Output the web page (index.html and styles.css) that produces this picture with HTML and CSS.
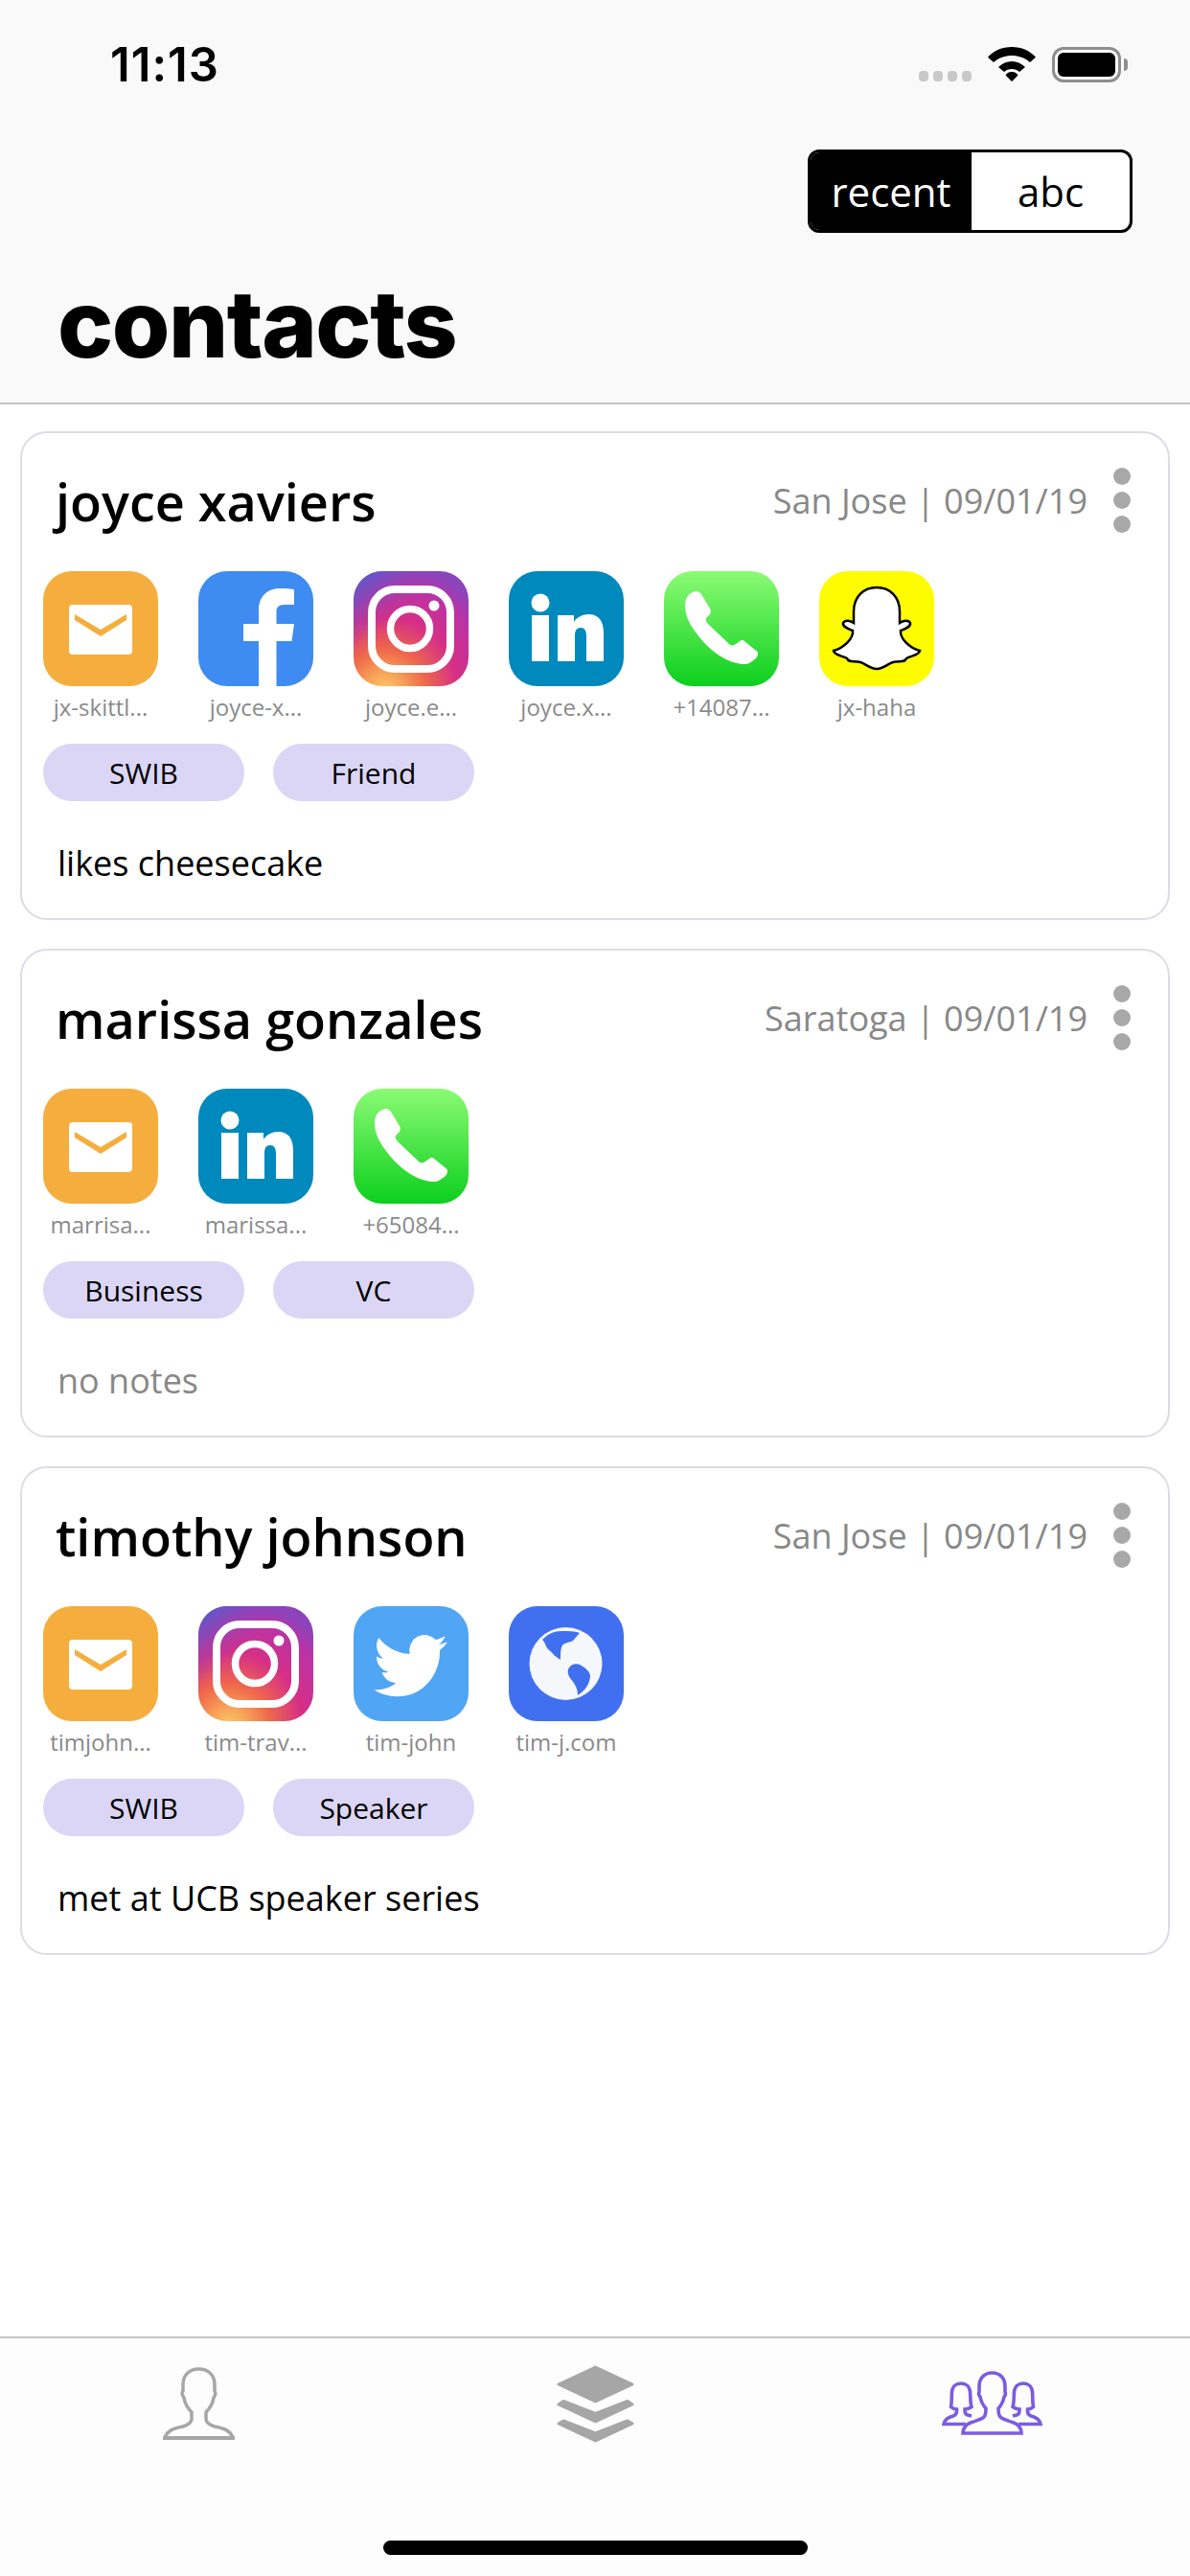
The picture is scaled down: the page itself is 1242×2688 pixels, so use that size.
FILE: index.html
```html
<!DOCTYPE html>
<html lang="en">
<head>
    <meta charset="UTF-8">
    <meta name="viewport" content="width=device-width, initial-scale=1.0">
    <title>contacts</title>
    <link rel="stylesheet" href="styles.css">
</head>
<body>

<!-- shared icons -->
<svg class="sprite" xmlns="http://www.w3.org/2000/svg">
    <defs>
        <radialGradient id="insta-warm" cx="0.27" cy="1.04" r="1.1">
            <stop offset="0" stop-color="#fdc868"/>
            <stop offset="0.14" stop-color="#f8a55a"/>
            <stop offset="0.32" stop-color="#ef6a4a"/>
            <stop offset="0.58" stop-color="#d62f86"/>
            <stop offset="0.85" stop-color="#b833a8"/>
            <stop offset="1" stop-color="#8c44bb"/>
        </radialGradient>
        <linearGradient id="insta-cool" x1="0" y1="0" x2="0.35" y2="0.4">
            <stop offset="0" stop-color="#4363d2"/>
            <stop offset="1" stop-color="#8c44bb" stop-opacity="0"/>
        </linearGradient>
        <linearGradient id="phone-green" x1="0" y1="0" x2="0" y2="1">
            <stop offset="0" stop-color="#8bfb74"/>
            <stop offset="1" stop-color="#0ccf1e"/>
        </linearGradient>
    </defs>
    <symbol id="i-mail" viewBox="0 0 120 120">
        <rect width="120" height="120" fill="#f5ae3d"/>
        <rect x="27" y="35" width="66" height="52" rx="4" fill="#fff"/>
        <path d="M33 45 60 61 87 45V51L60 68 33 51Z" fill="#f5ae3d"/>
    </symbol>
    <symbol id="i-fb" viewBox="0 0 120 120">
        <rect width="120" height="120" fill="#3e8cf2"/>
        <path d="M63 120V73H47V55H63V41C63 25 73 18 86 18C92 18 97 18.5 100 19V35H90C83 35 81.5 38 81.5 43V55H100L97.5 73H81.5V120Z" fill="#fff"/>
    </symbol>
    <symbol id="i-insta" viewBox="0 0 120 120">
        <rect width="120" height="120" fill="url(#insta-warm)"/>
        <rect width="120" height="120" fill="url(#insta-cool)"/>
        <rect x="19" y="19" width="82" height="83" rx="24" fill="none" stroke="#fff" stroke-width="8"/>
        <circle cx="59" cy="60" r="20.5" fill="none" stroke="#fff" stroke-width="7.5"/>
        <circle cx="84" cy="36" r="5.5" fill="#fff"/>
    </symbol>
    <symbol id="i-linkedin" viewBox="0 0 120 120">
        <rect width="120" height="120" fill="#0089bd"/>
        <circle cx="33" cy="33" r="9.5" fill="#fff"/>
        <path d="M24 46H42V94H24ZM51 46H68V53C71 48 77 45 83 45C95 45 99 53 99 65V94H81V68C81 62 79 59 75 59C70 59 69 63 69 68V94H51Z" fill="#fff"/>
    </symbol>
    <symbol id="i-phone" viewBox="0 0 120 120">
        <rect width="120" height="120" fill="url(#phone-green)"/>
        <path d="M30 22C25 24 22 29 22 36C22 46 27 56 34 65C42 76 56 90 72 95C79 97 85 98 89 96C94 93 98 90 98 86C98 84 97 83 95 82L84 73C82 71 80 72 78 74L73 77C71 78 69 77 67 75L48 57C44 53 43 51 44 49L48 45C49 43 49 41 48 39L39 24C37 21 33 20 30 22Z" fill="#fff"/>
    </symbol>
    <symbol id="i-snap" viewBox="0 0 120 120">
        <rect width="120" height="120" fill="#fffc00"/>
        <path d="M60 17C46 17 36 27 36 42V54C33 52 27 50 25 54C24 58 30 60 35 62C36 70 26 80 15 83C16 88 24 88 29 91C31 96 36 93 43 95C49 97 53 102 60 102C67 102 71 97 77 95C84 93 89 96 91 91C96 88 104 88 105 83C94 80 84 70 85 62C90 60 96 58 95 54C93 50 87 52 84 54V42C84 27 74 17 60 17Z" fill="#fff" stroke="#000" stroke-width="2.5"/>
    </symbol>
    <symbol id="i-twitter" viewBox="0 0 120 120">
        <rect width="120" height="120" fill="#50a5f5"/>
        <path transform="translate(21 22.5) scale(3.2 3.3)" d="M23.953 4.57a10 10 0 01-2.825.775 4.958 4.958 0 002.163-2.723c-.951.555-2.005.959-3.127 1.184a4.92 4.92 0 00-8.384 4.482C7.69 8.095 4.067 6.13 1.64 3.162a4.822 4.822 0 00-.666 2.475c0 1.71.87 3.213 2.188 4.096a4.904 4.904 0 01-2.228-.616v.06a4.923 4.923 0 003.946 4.827 4.996 4.996 0 01-2.212.085 4.936 4.936 0 004.604 3.417 9.867 9.867 0 01-6.102 2.105c-.39 0-.779-.023-1.17-.067a13.995 13.995 0 007.557 2.209c9.053 0 13.998-7.496 13.998-13.985 0-.21 0-.42-.015-.63A9.935 9.935 0 0024 4.59z" fill="#fff"/>
    </symbol>
    <symbol id="i-web" viewBox="0 0 120 120">
        <rect width="120" height="120" fill="#4070f0"/>
        <circle cx="59.500" cy="60" r="38" fill="#f5f7fa"/>
        <path d="M35 35C41 29 47 26 55 26C62 26 69 26 74 28L67 36C63 38 58 38 56 41C54 44 54 50 54 56L47 51C46 48 41 46 39 42C38 39 37 37 35 35Z" fill="#4070f0"/>
        <path d="M62 66C64 61 70 59 74 61C80 64 84 68 85 72C85 78 82 85 76 90L72 93C72 85 68 80 64 75C62 72 61 69 62 66Z" fill="#4070f0"/>
    </symbol>
</svg>

<div class="app">
    <header class="top">
        <div class="status-bar">
            <span class="clock">11:13</span>
            <div class="status-icons">
                <div class="signal"><i></i><i></i><i></i><i></i></div>
                <svg class="wifi" viewBox="0 0 50 36">
                    <path d="M0 10.700C6 4 15 0 25 0S44 4 50 10.700L44 16C38 11 32 9 25 9S12 11 6 16ZM11 21C15 17 20 15 25 15S35 17 39 21L33 26C31 24 28 23 25 23S19 24 17 26ZM25 26C22 26 20 27 18.500 29.500L25 36 31.500 29.500C30 27 28 26 25 26Z" fill="#000"/>
                </svg>
                <div class="battery"><div class="battery-fill"></div></div>
            </div>
        </div>
        <div class="sort-row">
            <div class="sort-toggle">
                <span class="sort-option active">recent</span>
                <span class="sort-option">abc</span>
            </div>
        </div>
        <h1>contacts</h1>
    </header>

    <main class="contact-list">
        <section class="card">
            <div class="card-head">
                <h2>joyce xaviers</h2>
                <span class="meta">San Jose | 09/01/19</span>
                <div class="more"><i></i><i></i><i></i></div>
            </div>
            <div class="links">
                <div class="link"><svg class="app-icon"><use href="#i-mail"/></svg><span>jx-skittl...</span></div>
                <div class="link"><svg class="app-icon"><use href="#i-fb"/></svg><span>joyce-x...</span></div>
                <div class="link"><svg class="app-icon"><use href="#i-insta"/></svg><span>joyce.e...</span></div>
                <div class="link"><svg class="app-icon"><use href="#i-linkedin"/></svg><span>joyce.x...</span></div>
                <div class="link"><svg class="app-icon"><use href="#i-phone"/></svg><span>+14087...</span></div>
                <div class="link"><svg class="app-icon"><use href="#i-snap"/></svg><span>jx-haha</span></div>
            </div>
            <div class="tags">
                <span class="tag">SWIB</span>
                <span class="tag">Friend</span>
            </div>
            <p class="note">likes cheesecake</p>
        </section>

        <section class="card">
            <div class="card-head">
                <h2>marissa gonzales</h2>
                <span class="meta">Saratoga | 09/01/19</span>
                <div class="more"><i></i><i></i><i></i></div>
            </div>
            <div class="links">
                <div class="link"><svg class="app-icon"><use href="#i-mail"/></svg><span>marrisa...</span></div>
                <div class="link"><svg class="app-icon"><use href="#i-linkedin"/></svg><span>marissa...</span></div>
                <div class="link"><svg class="app-icon"><use href="#i-phone"/></svg><span>+65084...</span></div>
            </div>
            <div class="tags">
                <span class="tag">Business</span>
                <span class="tag">VC</span>
            </div>
            <p class="note empty">no notes</p>
        </section>

        <section class="card">
            <div class="card-head">
                <h2>timothy johnson</h2>
                <span class="meta">San Jose | 09/01/19</span>
                <div class="more"><i></i><i></i><i></i></div>
            </div>
            <div class="links">
                <div class="link"><svg class="app-icon"><use href="#i-mail"/></svg><span>timjohn...</span></div>
                <div class="link"><svg class="app-icon"><use href="#i-insta"/></svg><span>tim-trav...</span></div>
                <div class="link"><svg class="app-icon"><use href="#i-twitter"/></svg><span>tim-john</span></div>
                <div class="link"><svg class="app-icon"><use href="#i-web"/></svg><span>tim-j.com</span></div>
            </div>
            <div class="tags">
                <span class="tag">SWIB</span>
                <span class="tag">Speaker</span>
            </div>
            <p class="note">met at UCB speaker series</p>
        </section>
    </main>

    <nav class="tab-bar">
        <div class="tabs">
            <svg class="tab-user" viewBox="0 0 75 76">
                <path d="M37.500 2C27 2 21 9 21 18V25C19.500 27 20.500 30 22 32C23 38 26 43 30 47V54C30 58 27 60 21 62C10 64 4 67 2 74H73C71 67 65 64 54 62C48 60 45 58 45 54V47C49 43 52 38 53 32C54.500 30 55.500 27 54 25V18C54 9 48 2 37.500 2Z" fill="none" stroke="#a6a6a6" stroke-width="3.500"/>
                <path d="M0 74H75" stroke="#a6a6a6" stroke-width="4"/>
            </svg>
            <svg class="tab-stack" viewBox="0 0 81 81">
                <g fill="#a6a6a6" stroke="#a6a6a6" stroke-width="3" stroke-linejoin="round">
                    <path d="M40.500 2 79 20 40.500 38 2 20Z"/>
                    <path d="M7 37.500 40.500 50.500 74 37.500 79 41 40.500 59 2 41Z"/>
                    <path d="M7 58 40.500 71 74 58 79 61 40.500 79 2 61Z"/>
                </g>
            </svg>
            <svg class="tab-group" viewBox="0 0 105 68">
                <g fill="none" stroke="#7b5ce0" stroke-width="3.600">
                    <path d="M52.500 2C44 2 39 8 39 16C39 19 39 21 39 22C38 24 39 26 40 27C41 32 43 36 46 39C46 43 46 46 44 48C41 51 35 52 30 54C25 56 22 60 22 65H83C83 60 80 56 75 54C70 52 64 51 61 48C59 46 59 43 59 39C62 36 64 32 65 27C66 26 67 24 66 22C66 21 66 19 66 16C66 8 61 2 52.500 2Z"/>
                    <path d="M25 55.500H2C3 50 8 48 12 47C15 46 16 44 15.500 40C13 40 11 39 9.500 37.500C10.500 33 10 28 10.500 22C11 16 15 13 20 13C25 13 29 16 29.500 22C30 28 29.500 33 31 37.500C29 39 26 40 24 40C24 43 24 45 27 46L31 47"/>
                    <path transform="matrix(-1 0 0 1 105 0)" d="M25 55.500H2C3 50 8 48 12 47C15 46 16 44 15.500 40C13 40 11 39 9.500 37.500C10.500 33 10 28 10.500 22C11 16 15 13 20 13C25 13 29 16 29.500 22C30 28 29.500 33 31 37.500C29 39 26 40 24 40C24 43 24 45 27 46L31 47"/>
                </g>
            </svg>
        </div>
        <div class="home-bar"></div>
    </nav>
</div>

</body>
</html>
```

FILE: styles.css
```css
body {
    margin: 0;
    background-color: #fff;
    font-family: 'Open Sans', 'Noto Sans', sans-serif;
    color: #000;
}

.sprite {
    display: block;
    width: 0;
    height: 0;
}

.app {
    width: 1242px;
    height: 2688px;
    display: flex;
    flex-direction: column;
    overflow: hidden;
}

/* Header */
.top {
    height: 422px;
    box-sizing: border-box;
    background-color: #f9f9f9;
    border-bottom: 2px solid #c4c4c4;
    padding: 0 60px;
    flex-shrink: 0;
}

.status-bar {
    height: 156px;
    display: flex;
    justify-content: space-between;
    padding: 44px 12px 0 55px;
    box-sizing: border-box;
}

.clock {
    font-family: Inter, sans-serif;
    font-size: 49px;
    font-weight: 600;
    line-height: 48px;
    letter-spacing: 1px;
}

.status-icons {
    display: flex;
    align-items: flex-start;
    height: 40px;
    margin-top: 5px;
}

.signal {
    display: flex;
    gap: 5px;
    margin-top: 25px;
    margin-right: 17px;
}

.signal i {
    display: block;
    width: 10px;
    height: 11px;
    border-radius: 4px;
    background-color: #c9c9c9;
}

.wifi {
    width: 50px;
    height: 36px;
    margin-right: 17px;
}

.battery {
    width: 72px;
    height: 37px;
    box-sizing: border-box;
    border: 3px solid #8e8e8e;
    border-radius: 12px;
    padding: 3px;
    position: relative;
}

.battery::after {
    content: "";
    position: absolute;
    right: -10px;
    top: 9px;
    width: 4px;
    height: 13px;
    border-radius: 0 4px 4px 0;
    background-color: #8e8e8e;
}

.battery-fill {
    height: 100%;
    border-radius: 6px;
    background-color: #000;
}

.sort-row {
    display: flex;
    justify-content: flex-end;
}

.sort-toggle {
    display: flex;
    width: 339px;
    height: 87px;
    box-sizing: border-box;
    border: 3px solid #000;
    border-radius: 12px;
    overflow: hidden;
    background-color: #fff;
}

.sort-option {
    flex: 1;
    display: flex;
    align-items: center;
    justify-content: center;
    font-size: 42px;
}

.sort-option.active {
    flex: 0 0 168px;
    background-color: #000;
    color: #fff;
}

h1 {
    margin: 40px 0 0 0;
    font-family: Inter, sans-serif;
    font-size: 98px;
    font-weight: 800;
    line-height: 110px;
    letter-spacing: -1.5px;
}

/* Cards */
.contact-list {
    flex: 1;
    display: flex;
    flex-direction: column;
    gap: 30px;
    padding: 28px 21px 0 21px;
}

.card {
    height: 510px;
    box-sizing: border-box;
    background-color: #fff;
    border: 2px solid #dcdce6;
    border-radius: 28px;
    padding: 0 0 0 22px;
}

.card-head {
    height: 144px;
    display: flex;
    align-items: flex-start;
    padding-left: 13px;
}

.card-head h2 {
    margin: 36px 0 0 0;
    flex: 1;
    font-size: 54px;
    font-weight: 600;
    line-height: 70px;
}

.meta {
    margin-top: 46px;
    font-size: 36px;
    line-height: 50px;
    color: #888;
}

.more {
    display: flex;
    flex-direction: column;
    gap: 7px;
    margin: 36px 39px 0 27px;
}

.more i {
    display: block;
    width: 18px;
    height: 18px;
    border-radius: 50%;
    background-color: #a8a8a8;
}

.links {
    display: flex;
    gap: 42px;
    height: 160px;
}

.link {
    width: 120px;
    display: flex;
    flex-direction: column;
    align-items: center;
}

.app-icon {
    display: block;
    width: 120px;
    height: 120px;
    border-radius: 30px;
}

.link span {
    margin-top: 7px;
    font-size: 24px;
    line-height: 30px;
    color: #8a8a8a;
    white-space: nowrap;
}

.tags {
    display: flex;
    gap: 30px;
    margin-top: 20px;
}

.tag {
    width: 210px;
    height: 60px;
    border-radius: 30px;
    background-color: #dbd6f5;
    display: flex;
    align-items: center;
    justify-content: center;
    font-size: 30px;
}

.note {
    margin: 40px 0 0 15px;
    font-size: 36px;
    line-height: 50px;
}

.note.empty {
    color: #888;
}

/* Bottom tabs */
.tab-bar {
    height: 250px;
    box-sizing: border-box;
    border-top: 2px solid #c4c4c4;
    background-color: #fdfdfd;
    flex-shrink: 0;
}

.tabs {
    height: 211px;
    display: grid;
    grid-template-columns: repeat(3, 1fr);
    justify-items: center;
    align-items: start;
}

.tab-user {
    width: 75px;
    height: 76px;
    margin-top: 30px;
}

.tab-stack {
    width: 81px;
    height: 81px;
    margin-top: 28px;
}

.tab-group {
    width: 105px;
    height: 68px;
    margin-top: 34px;
}

.home-bar {
    width: 443px;
    height: 15px;
    margin: 0 auto;
    border-radius: 8px;
    background-color: #000;
}
```
